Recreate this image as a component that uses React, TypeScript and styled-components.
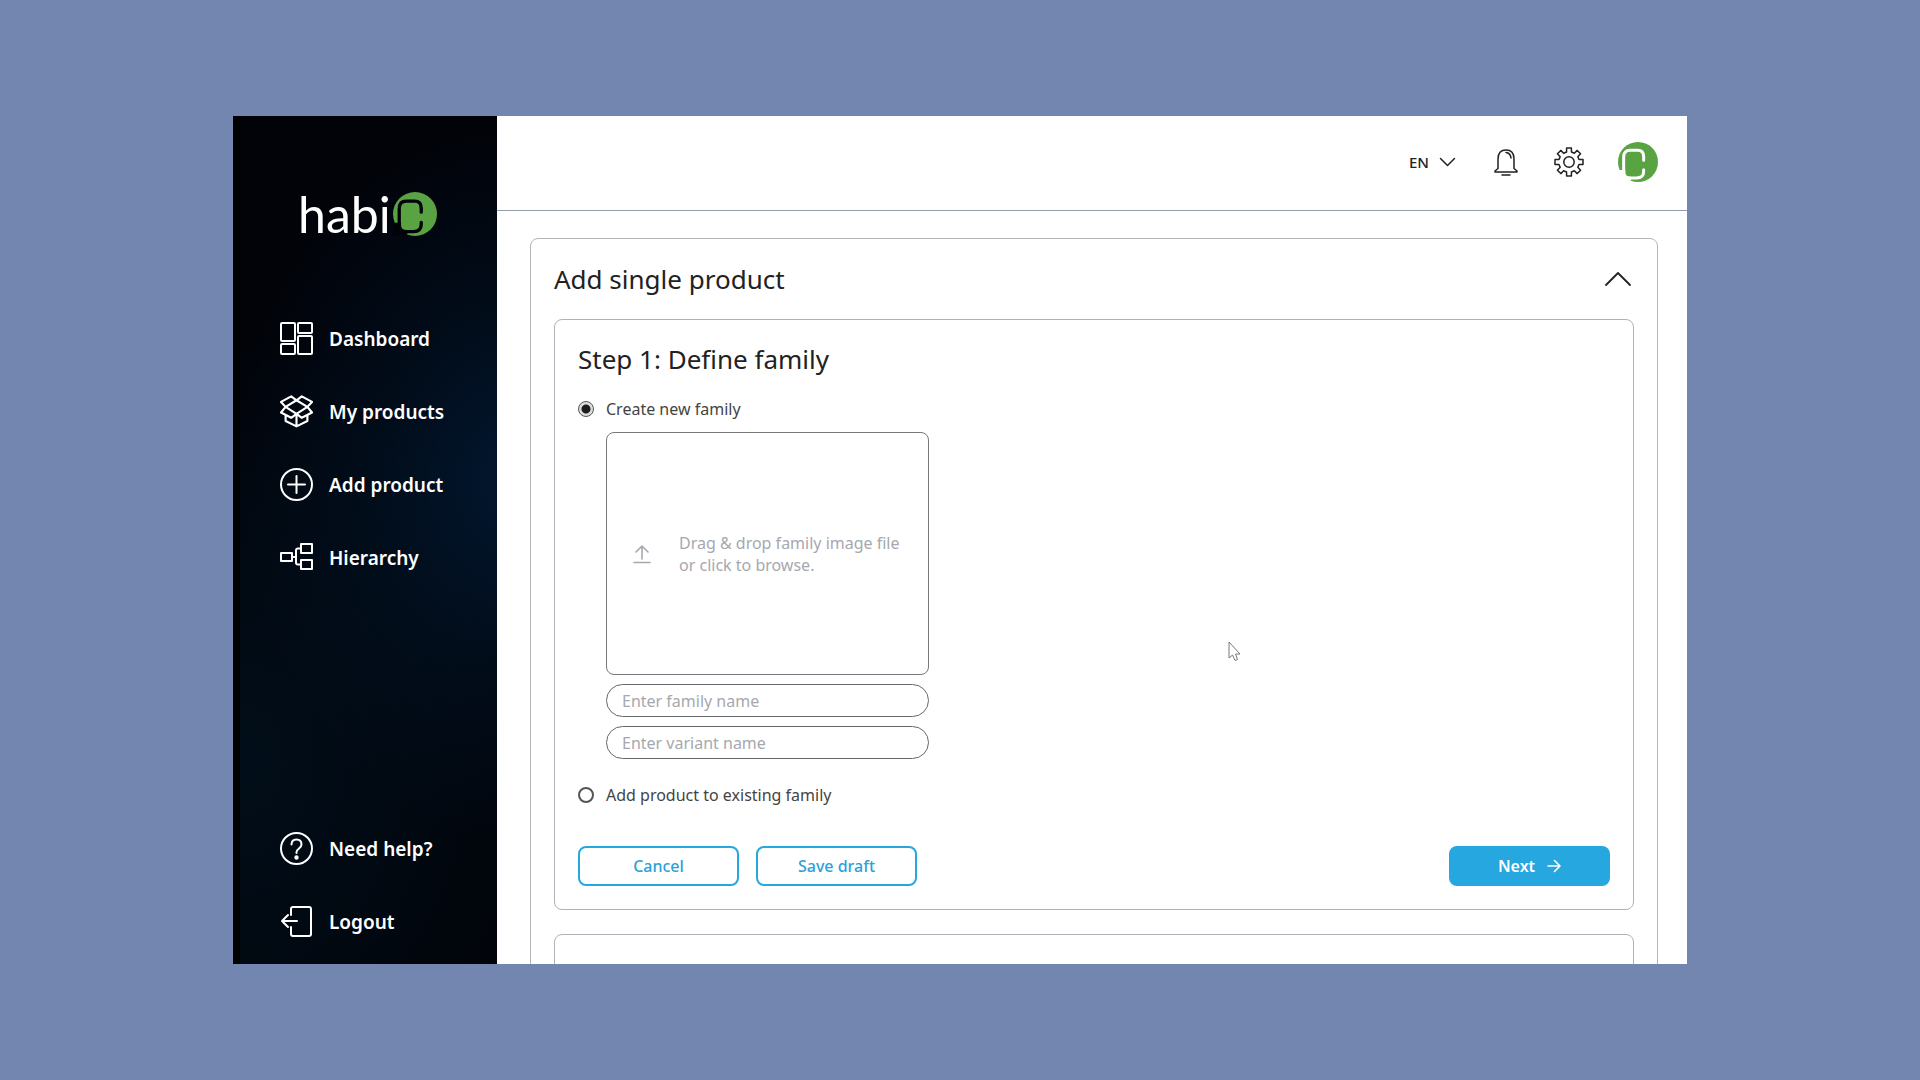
import React, { useState } from "react";
import styled, { createGlobalStyle } from "styled-components";

const GlobalStyle = createGlobalStyle`
  *, *::before, *::after { box-sizing: border-box; }
  body { margin: 0; background: #7386af; }
  body, button, input, select { font-family: "Noto Sans", "Open Sans", sans-serif; }
`;

const Page = styled.div`
  position: relative;
  display: flex;
  height: 100vh;
  padding: 116px 233px;
  background: #7386af;
`;

const Window = styled.div`
  display: flex;
  flex: 1;
  min-width: 0;
  overflow: hidden;
  background: #fff;
`;

const Sidebar = styled.aside`
  display: flex;
  flex-direction: column;
  flex: none;
  width: 264px;
  padding: 53px 16px 26px 40px;
  border-left: 7px solid #000;
  color: #fff;
  background:
    radial-gradient(ellipse 110% 42% at 106% 43%, #02172f 0%, rgba(2, 20, 40, 0.5) 50%, transparent 100%),
    radial-gradient(ellipse 130% 50% at 0% 76%, #010e19 0%, transparent 100%),
    #010309;
`;

const Logo = styled.a`
  display: flex;
  align-items: flex-end;
  height: 67px;
  padding-left: 18px;
  color: #fff;
  text-decoration: none;
`;

const LogoWord = styled.span`
  width: 95px;
  font: 400 50px/44px Lato, sans-serif;
`;

const Nav = styled.nav`
  display: flex;
  flex-direction: column;
  gap: 40px;
  margin-top: 86px;

  & + & { margin-top: auto; }
`;

const NavLink = styled.a`
  display: flex;
  align-items: center;
  gap: 16px;
  height: 33px;
  color: #fff;
  font-size: 19px;
  font-weight: 600;
  line-height: 28px;
  text-decoration: none;
  white-space: nowrap;
`;

const Main = styled.main`
  display: flex;
  flex-direction: column;
  flex: 1;
  min-width: 0;
  color: #222;
`;

const TopBar = styled.header`
  display: flex;
  align-items: center;
  justify-content: flex-end;
  flex: none;
  height: 95px;
  padding: 0 29px 3px;
  border-bottom: 1px solid #929cac;
`;

const Language = styled.label`
  display: grid;
  align-items: center;
  width: 47px;
  margin-right: 36px;

  & > * { grid-area: 1 / 1; }
  & > svg { justify-self: end; pointer-events: none; }
`;

const LanguageSelect = styled.select`
  width: 100%;
  padding: 0;
  border: 0;
  appearance: none;
  background: none;
  color: #222;
  font-size: 15px;
  font-weight: 500;
  line-height: 20px;
`;

const IconButton = styled.button`
  display: flex;
  padding: 0;
  margin: 0;
  border: 0;
  background: none;
  color: #222;
  cursor: pointer;
`;

const Actions = styled.div`
  display: flex;
  align-items: center;
  gap: 34px;
`;

const Content = styled.div`
  flex: 1;
  min-height: 0;
  overflow: hidden;
  padding: 27px 29px 0 33px;
`;

const Card = styled.section`
  padding: 0 23px 23px;
  border: 1px solid #b4b5ba;
  border-radius: 8px;
`;

const CardHeader = styled.div`
  display: flex;
  align-items: center;
  justify-content: space-between;
  height: 80px;
  padding-right: 2px;
`;

const Title = styled.h1`
  margin: 0;
  font-size: 26px;
  font-weight: 400;
  line-height: 40px;
`;

const StepTitle = styled(Title).attrs({ as: "h2" })``;

const Step = styled.section`
  min-height: 120px;
  padding: 19px 23px 23px;
  border: 1px solid #b0b2b9;
  border-radius: 8px;

  & + & { margin-top: 24px; }
`;

const RadioRow = styled.label`
  display: flex;
  align-items: center;
  gap: 12px;
  height: 22px;
  color: #444;
  font-size: 16px;
  line-height: 22px;
`;

const Radio = styled.input`
  appearance: none;
  width: 16px;
  height: 16px;
  margin: 0;
  border: 2px solid #555;
  border-radius: 50%;

  &:checked {
    border-width: 1px;
    background: radial-gradient(circle, #1c1c1c 0 4px, #ddd 5px);
  }
`;

const Choices = styled.div`
  display: flex;
  flex-direction: column;
  padding-top: 19px;
`;

const FamilyFields = styled.div`
  display: flex;
  flex-direction: column;
  gap: 9px;
  width: 323px;
  margin: 12px 0 25px 28px;
`;

const DropZone = styled.button`
  display: flex;
  align-items: center;
  gap: 28px;
  height: 243px;
  padding: 0 26px;
  border: 1px solid #77787c;
  border-radius: 8px;
  background: #fff;
  color: #a6a8ae;
  font-size: 16px;
  line-height: 22px;
  text-align: left;
  white-space: nowrap;
`;

const TextField = styled.input`
  height: 33px;
  padding: 0 15px;
  border: 1px solid #66676b;
  border-radius: 17px;
  background: #fff;
  color: #222;
  font-size: 16px;

  &::placeholder { color: #a6a8ae; opacity: 1; }
`;

const ButtonRow = styled.div`
  display: flex;
  gap: 17px;
  margin-top: 40px;
`;

const Button = styled.button<{ $primary?: boolean }>`
  display: flex;
  align-items: center;
  justify-content: center;
  gap: 12px;
  width: 161px;
  height: 40px;
  margin-left: ${(p) => (p.$primary ? "auto" : "0")};
  border: 2px solid #27a7e0;
  border-radius: 8px;
  background: ${(p) => (p.$primary ? "#27a7e0" : "#fff")};
  color: ${(p) => (p.$primary ? "#fff" : "#2d9fd9")};
  font-size: 16px;
  font-weight: ${(p) => (p.$primary ? 600 : 500)};
  cursor: pointer;
`;

const Pointer = styled.svg`
  position: absolute;
  left: 1228px;
  top: 641px;
  pointer-events: none;
`;

const line = {
  fill: "none",
  stroke: "currentColor",
  strokeLinecap: "round" as const,
  strokeLinejoin: "round" as const,
  "aria-hidden": true,
};

const BrandMark = ({ size, cut }: { size: number; cut: string }) => (
  <svg width={size} height={size} viewBox="0 0 120 120" aria-hidden="true">
    <circle cx="60" cy="60" r="60" fill="#5aa343" />
    <path d="M10 84H22V104H40V112L34 120H0V84Z" fill={cut} />
    <path
      d="M77 55V44Q77 25 59 25H36Q17 25 17 46V89Q17 108 38 108H56Q77 108 77 88V83"
      fill="none"
      stroke={cut}
      strokeWidth="9"
      strokeLinecap="round"
    />
  </svg>
);

const DashboardIcon = () => (
  <svg width="33" height="33" viewBox="0 0 33 33" strokeWidth="2" {...line}>
    <rect x="1" y="1" width="14" height="18" rx="1" />
    <rect x="18" y="1" width="14" height="10" rx="1" />
    <rect x="1" y="22" width="14" height="10" rx="1" />
    <rect x="18" y="14" width="14" height="18" rx="1" />
  </svg>
);

const BoxIcon = () => (
  <svg width="33" height="33" viewBox="-1 -2 100 100" strokeWidth="6.5" {...line}>
    <path d="M33 2L49 14L65 2L96 19L82 34L96 51L65 67L49 55L33 67L2 51L16 34L2 19Z" />
    <path d="M16 34L49 14L82 34L49 55Z" />
    <path d="M16 61V77L49 93L82 77V61M49 57V92" />
  </svg>
);

const AddIcon = () => (
  <svg width="33" height="33" viewBox="0 0 33 33" strokeWidth="2" {...line}>
    <circle cx="16.5" cy="16.5" r="15.5" />
    <path d="M16.5 8V25M8 16.5H25" />
  </svg>
);

const HierarchyIcon = () => (
  <svg width="33" height="33" viewBox="0 0 33 33" strokeWidth="2" {...line}>
    <rect x="1" y="12" width="11" height="8" />
    <rect x="21" y="3" width="11" height="9" />
    <rect x="21" y="19" width="11" height="9" />
    <path d="M12 16H16M21 7.500H18Q16 7.500 16 9.500V21.500Q16 23.500 18 23.500H21" />
  </svg>
);

const HelpIcon = () => (
  <svg width="33" height="33" viewBox="0 0 33 33" strokeWidth="2" {...line}>
    <circle cx="16.5" cy="16.5" r="15.5" />
    <path d="M11.500 12.500Q11.500 7.500 16.500 7.500T21.500 12.500Q21.500 14.500 19 16.500T16.500 20V21" />
    <circle cx="16.5" cy="25.5" r="1.2" fill="currentColor" />
  </svg>
);

const LogoutIcon = () => (
  <svg width="33" height="33" viewBox="0 0 33 33" strokeWidth="2" {...line}>
    <path d="M11 10V4Q11 2 13 2H29Q31 2 31 4V29Q31 31 29 31H13Q11 31 11 29V22" />
    <path d="M17 16H2M8 10L2 16L8 22" />
  </svg>
);

const BellIcon = () => (
  <svg width="28" height="28" viewBox="-2 0 28 28" strokeWidth="1.5" {...line}>
    <path d="M1 24V23L4 20.500V11Q4 2 12 2T20 11V20.500L23 23V24Z" />
    <path d="M12 4.500Q16.500 5 17 10M8 27H16" />
  </svg>
);

const gearPath = Array.from({ length: 8 }, (_, i) => {
  const at = (radius: number, offset: number) => {
    const angle = (i * Math.PI) / 4 + offset;
    return `${(15 + radius * Math.sin(angle)).toFixed(2)} ${(15 - radius * Math.cos(angle)).toFixed(2)}`;
  };
  return `${i ? "L" : "M"}${at(10.3, -0.24)}L${at(14.2, -0.17)}L${at(14.2, 0.17)}L${at(10.3, 0.24)}`;
}).join("") + "Z";

const GearIcon = () => (
  <svg width="30" height="30" viewBox="0 0 30 30" strokeWidth="1.5" {...line}>
    <path d={gearPath} />
    <circle cx="15" cy="15" r="5.2" />
  </svg>
);

const UploadIcon = () => (
  <svg width="18" height="20" viewBox="0 0 18 20" strokeWidth="1.6" {...line}>
    <path d="M9 15V2M3 8L9 2L15 8M1 18.500H17" />
  </svg>
);

const topLinks = [
  { label: "Dashboard", icon: <DashboardIcon /> },
  { label: "My products", icon: <BoxIcon /> },
  { label: "Add product", icon: <AddIcon /> },
  { label: "Hierarchy", icon: <HierarchyIcon /> },
];

const bottomLinks = [
  { label: "Need help?", icon: <HelpIcon /> },
  { label: "Logout", icon: <LogoutIcon /> },
];

export default function App() {
  const [mode, setMode] = useState("new");

  return (
    <>
      <GlobalStyle />
      <Page>
        <Window>
          <Sidebar>
            <Logo href="#" aria-label="habic">
              <LogoWord>habi</LogoWord>
              <BrandMark size={44} cut="#010309" />
            </Logo>
            <Nav aria-label="Main">
              {topLinks.map((item) => (
                <NavLink href="#" key={item.label}>{item.icon}{item.label}</NavLink>
              ))}
            </Nav>
            <Nav aria-label="Account">
              {bottomLinks.map((item) => (
                <NavLink href="#" key={item.label}>{item.icon}{item.label}</NavLink>
              ))}
            </Nav>
          </Sidebar>
          <Main>
            <TopBar>
              <Language>
                <LanguageSelect aria-label="Language" defaultValue="EN">
                  <option>EN</option>
                </LanguageSelect>
                <svg width="17" height="10" viewBox="0 0 17 10" strokeWidth="1.5" {...line}>
                  <path d="M1.500 1.500L8.500 8.500L15.500 1.500" />
                </svg>
              </Language>
              <Actions>
                <IconButton aria-label="Notifications"><BellIcon /></IconButton>
                <IconButton aria-label="Settings"><GearIcon /></IconButton>
                <IconButton aria-label="Profile"><BrandMark size={40} cut="#fff" /></IconButton>
              </Actions>
            </TopBar>
            <Content>
              <Card>
                <CardHeader>
                  <Title>Add single product</Title>
                  <IconButton aria-label="Collapse">
                    <svg width="28" height="16" viewBox="0 0 28 16" strokeWidth="1.8" {...line}>
                      <path d="M2 14L14 2L26 14" />
                    </svg>
                  </IconButton>
                </CardHeader>
                <Step>
                  <StepTitle>Step 1: Define family</StepTitle>
                  <Choices>
                    <RadioRow>
                      <Radio type="radio" name="family" checked={mode === "new"} onChange={() => setMode("new")} />
                      Create new family
                    </RadioRow>
                    <FamilyFields>
                      <DropZone type="button">
                        <UploadIcon />
                        <span>Drag &amp; drop family image file<br />or click to browse.</span>
                      </DropZone>
                      <TextField aria-label="Family name" placeholder="Enter family name" />
                      <TextField aria-label="Variant name" placeholder="Enter variant name" />
                    </FamilyFields>
                    <RadioRow>
                      <Radio type="radio" name="family" checked={mode === "existing"} onChange={() => setMode("existing")} />
                      Add product to existing family
                    </RadioRow>
                  </Choices>
                  <ButtonRow>
                    <Button type="button">Cancel</Button>
                    <Button type="button">Save draft</Button>
                    <Button type="button" $primary>
                      Next
                      <svg width="14" height="14" viewBox="0 0 14 14" strokeWidth="1.6" {...line}>
                        <path d="M1 7H13M7.500 1.500L13 7L7.500 12.500" />
                      </svg>
                    </Button>
                  </ButtonRow>
                </Step>
                <Step />
              </Card>
            </Content>
          </Main>
        </Window>
        <Pointer width="14" height="21" viewBox="0 0 14 21" aria-hidden="true">
          <path d="M1 1V17L4.500 14L7 19.500L9.500 18.500L7.500 13H12Z" fill="#fff" stroke="#77787c" />
        </Pointer>
      </Page>
    </>
  );
}
